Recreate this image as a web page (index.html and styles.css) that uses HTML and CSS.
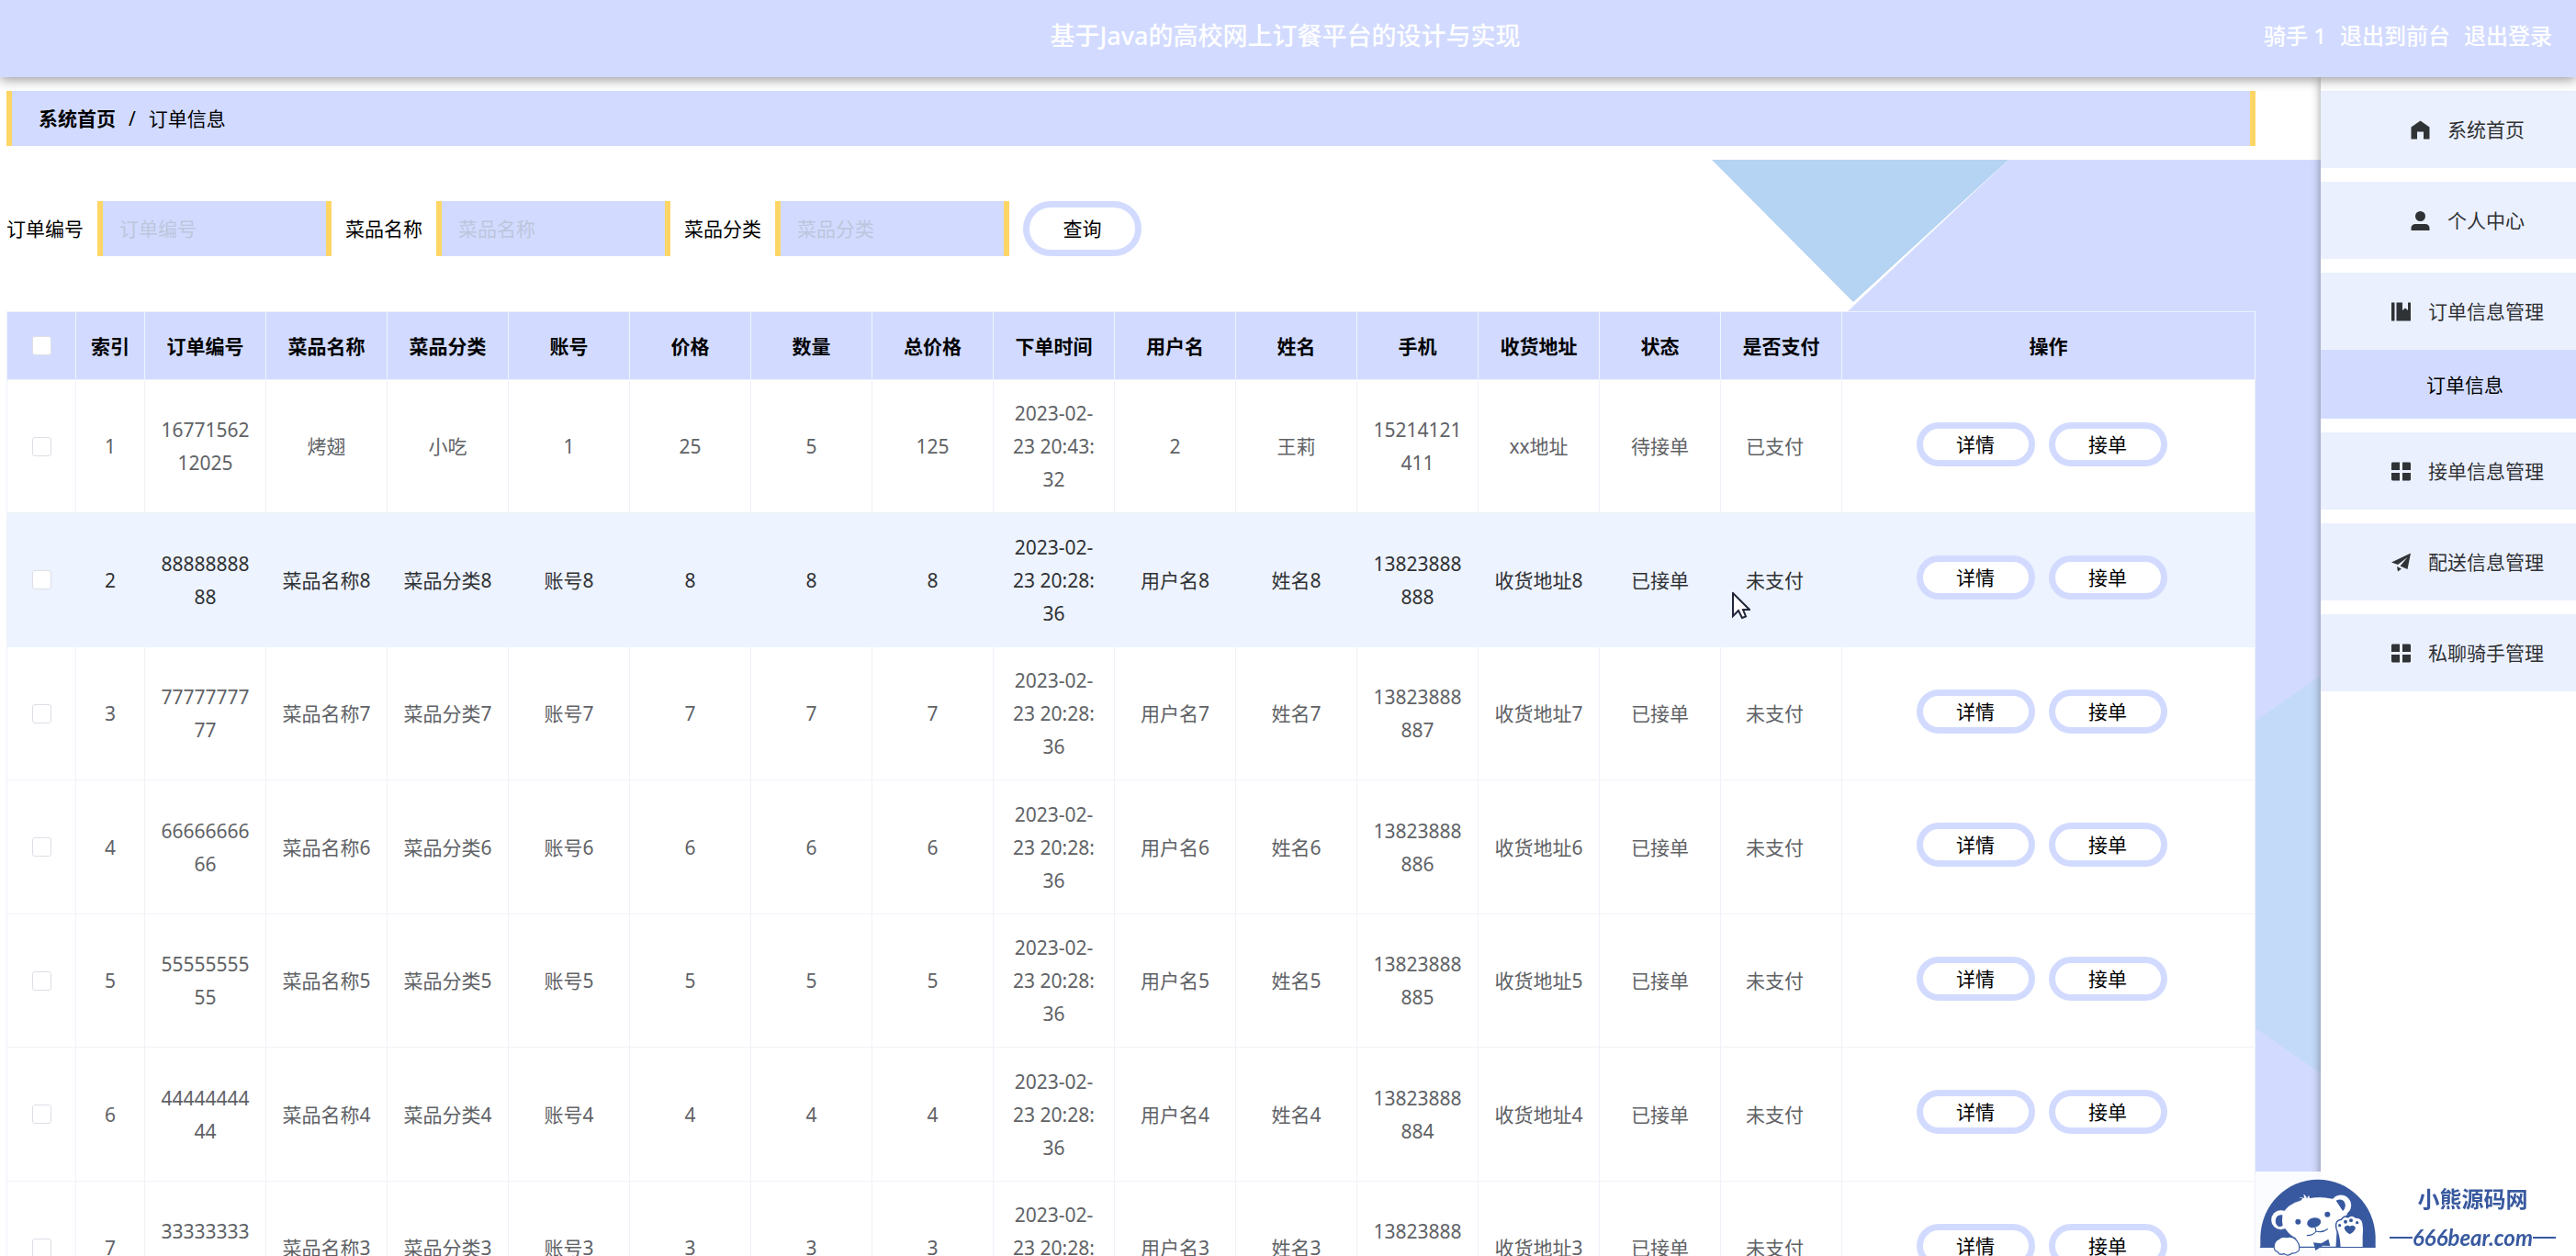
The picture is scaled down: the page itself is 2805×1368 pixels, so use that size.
FILE: index.html
```html
<!DOCTYPE html>
<html lang="zh-CN">
<head>
<meta charset="utf-8">
<title>订单信息</title>
<link rel="stylesheet" href="styles.css">
</head>
<body>
<header class="topbar">
  <h1 class="topbar-title">基于Java的高校网上订餐平台的设计与实现</h1>
  <nav class="topbar-user">
    <span>骑手 1</span>
    <a href="#">退出到前台</a>
    <a href="#">退出登录</a>
  </nav>
</header>

<div class="layout">
  <main class="main">
    <nav class="breadcrumb">
      <a class="breadcrumb-home" href="#">系统首页</a>
      <span>/</span>
      <span>订单信息</span>
    </nav>

    <div class="content">
      <svg class="backdrop" viewBox="0 0 663 1195" aria-hidden="true">
        <polygon fill="#d2dbff" points="323,0 663,0 663,1195 400,1195 146,167"/>
        <polygon fill="#b5d3f2" points="0,0 323,0 154,155"/>
        <polygon fill="#c4daf9" points="663,562 592,611 592,946 663,995"/>
      </svg>

      <form class="search">
        <label for="f-no">订单编号</label>
        <input class="search-input" id="f-no" type="text" placeholder="订单编号">
        <label for="f-name">菜品名称</label>
        <input class="search-input" id="f-name" type="text" placeholder="菜品名称">
        <label for="f-type">菜品分类</label>
        <input class="search-input" id="f-type" type="text" placeholder="菜品分类">
        <button class="pill pill-search" type="button">查询</button>
      </form>

      <table class="orders">
        <colgroup>
          <col class="col-small"><col class="col-small">
          <col class="col-data" span="14">
          <col>
        </colgroup>
        <thead>
          <tr>
            <th><input class="check" type="checkbox" aria-label="全选"></th>
            <th>索引</th><th>订单编号</th><th>菜品名称</th><th>菜品分类</th><th>账号</th><th>价格</th><th>数量</th><th>总价格</th><th>下单时间</th><th>用户名</th><th>姓名</th><th>手机</th><th>收货地址</th><th>状态</th><th>是否支付</th><th>操作</th>
          </tr>
        </thead>
        <tbody>
          <tr>
            <td><input class="check" type="checkbox" aria-label="选择 1"></td>
            <td>1</td><td>1677156212025</td><td>烤翅</td><td>小吃</td><td>1</td><td>25</td><td>5</td><td>125</td><td>2023-02-<br>23 20:43:<br>32</td><td>2</td><td>王莉</td><td>15214121411</td><td>xx地址</td><td>待接单</td><td class="paid">已支付</td>
            <td class="ops"><button class="pill" type="button">详情</button><button class="pill" type="button">接单</button></td>
          </tr>
          <tr class="is-hover">
            <td><input class="check" type="checkbox" aria-label="选择 2"></td>
            <td>2</td><td>8888888888</td><td>菜品名称8</td><td>菜品分类8</td><td>账号8</td><td>8</td><td>8</td><td>8</td><td>2023-02-<br>23 20:28:<br>36</td><td>用户名8</td><td>姓名8</td><td>13823888888</td><td>收货地址8</td><td>已接单</td><td class="paid">未支付</td>
            <td class="ops"><button class="pill" type="button">详情</button><button class="pill" type="button">接单</button></td>
          </tr>
          <tr>
            <td><input class="check" type="checkbox" aria-label="选择 3"></td>
            <td>3</td><td>7777777777</td><td>菜品名称7</td><td>菜品分类7</td><td>账号7</td><td>7</td><td>7</td><td>7</td><td>2023-02-<br>23 20:28:<br>36</td><td>用户名7</td><td>姓名7</td><td>13823888887</td><td>收货地址7</td><td>已接单</td><td class="paid">未支付</td>
            <td class="ops"><button class="pill" type="button">详情</button><button class="pill" type="button">接单</button></td>
          </tr>
          <tr>
            <td><input class="check" type="checkbox" aria-label="选择 4"></td>
            <td>4</td><td>6666666666</td><td>菜品名称6</td><td>菜品分类6</td><td>账号6</td><td>6</td><td>6</td><td>6</td><td>2023-02-<br>23 20:28:<br>36</td><td>用户名6</td><td>姓名6</td><td>13823888886</td><td>收货地址6</td><td>已接单</td><td class="paid">未支付</td>
            <td class="ops"><button class="pill" type="button">详情</button><button class="pill" type="button">接单</button></td>
          </tr>
          <tr>
            <td><input class="check" type="checkbox" aria-label="选择 5"></td>
            <td>5</td><td>5555555555</td><td>菜品名称5</td><td>菜品分类5</td><td>账号5</td><td>5</td><td>5</td><td>5</td><td>2023-02-<br>23 20:28:<br>36</td><td>用户名5</td><td>姓名5</td><td>13823888885</td><td>收货地址5</td><td>已接单</td><td class="paid">未支付</td>
            <td class="ops"><button class="pill" type="button">详情</button><button class="pill" type="button">接单</button></td>
          </tr>
          <tr>
            <td><input class="check" type="checkbox" aria-label="选择 6"></td>
            <td>6</td><td>4444444444</td><td>菜品名称4</td><td>菜品分类4</td><td>账号4</td><td>4</td><td>4</td><td>4</td><td>2023-02-<br>23 20:28:<br>36</td><td>用户名4</td><td>姓名4</td><td>13823888884</td><td>收货地址4</td><td>已接单</td><td class="paid">未支付</td>
            <td class="ops"><button class="pill" type="button">详情</button><button class="pill" type="button">接单</button></td>
          </tr>
          <tr>
            <td><input class="check" type="checkbox" aria-label="选择 7"></td>
            <td>7</td><td>3333333333</td><td>菜品名称3</td><td>菜品分类3</td><td>账号3</td><td>3</td><td>3</td><td>3</td><td>2023-02-<br>23 20:28:<br>36</td><td>用户名3</td><td>姓名3</td><td>13823888883</td><td>收货地址3</td><td>已接单</td><td class="paid">未支付</td>
            <td class="ops"><button class="pill" type="button">详情</button><button class="pill" type="button">接单</button></td>
          </tr>
        </tbody>
      </table>
    </div>
  </main>

  <aside class="sidebar">
    <a class="menu-item" href="#">
      <svg class="icon" viewBox="0 0 21 21"><path d="M10.5 0.500 20.500 7.500V20.500H14V12.500H7V20.500H0.500V7.500Z"/></svg>
      系统首页
    </a>
    <a class="menu-item" href="#">
      <svg class="icon" viewBox="0 0 21 21"><circle cx="10.500" cy="5.500" r="5.500"/><path d="M0.500 21V18.500C0.500 15.500 2.500 14 5 14H16C18.500 14 20.500 15.500 20.500 18.500V21Z"/></svg>
      个人中心
    </a>
    <div class="menu-group">
      <a class="menu-item" href="#">
        <svg class="icon" viewBox="0 0 21 21"><path d="M0 0.500H3.500V20.500H0ZM5.500 0.500H12V9L15 6.500 18 9V0.500H21V20.500H5.500Z"/></svg>
        订单信息管理
      </a>
      <a class="submenu-item" href="#">订单信息</a>
    </div>
    <a class="menu-item" href="#">
      <svg class="icon" viewBox="0 0 21 21"><path d="M1 0.500H9V9H0V1.500ZM12 0.500H20L21 1.500V9H12ZM0 12H9V20.500H1L0 19.500ZM12 12H21V19.500L20 20.500H12Z"/></svg>
      接单信息管理
    </a>
    <a class="menu-item" href="#">
      <svg class="icon" viewBox="0 0 21 21"><path d="M21 0.500 17.500 18 9.500 14.500 17.500 5 7 13 0 10.500ZM6 15 11 17.500 7 20.500Z"/></svg>
      配送信息管理
    </a>
    <a class="menu-item" href="#">
      <svg class="icon" viewBox="0 0 21 21"><path d="M1 0.500H9V9H0V1.500ZM12 0.500H20L21 1.500V9H12ZM0 12H9V20.500H1L0 19.500ZM12 12H21V19.500L20 20.500H12Z"/></svg>
      私聊骑手管理
    </a>
  </aside>
</div>

<div class="brand">
  <svg class="brand-bear" viewBox="18 18 399 276" aria-hidden="true">
    <path fill="#38599f" d="M34 266V230C38 125 120 44 222 44S406 125 410 230V266Z"/>
    <g fill="#fff" stroke="#fff">
      <path d="M166 113 174 104 162 104Q172 102 178 106L176 93Q184 98 186 107L192 97 195 106Q230 98 271 108L318 158 285 180 280 264H160L150 235Q130 227 116 205L106 160Q120 125 166 113Z"/>
      <circle cx="297" cy="128" r="33"/>
      <circle cx="101" cy="176" r="31"/>
      <path d="M266 112 300 160 262 190 240 150ZM104 160 135 150 140 220 118 205Z"/>
    </g>
    <path fill="#38599f" d="M281 113Q298 104 308 116Q317 134 303 147Q296 135 281 113ZM106 160Q91 158 85 170Q79 187 92 197Q99 200 107 195Q104 180 106 160Z"/>
    <ellipse cx="209" cy="185" rx="23" ry="16" fill="#38599f" transform="rotate(-14 209 185)"/>
    <circle cx="157" cy="182" r="9" fill="#38599f"/>
    <circle cx="253" cy="158" r="9" fill="#38599f"/>
    <g fill="none" stroke="#38599f" stroke-width="3.500" stroke-linecap="round">
      <path d="M213 201 216 213Q236 219 253 206M216 213Q207 227 187 227M34 265H408"/>
    </g>
    <path fill="#fff" stroke="#38599f" stroke-width="4" d="M294 264Q292 228 282 205Q276 176 299 175Q306 160 320 168Q332 156 345 168Q366 168 369 187Q373 205 370 230V264"/>
    <path fill="#38599f" d="M326 223Q307 211 308 200Q317 190 327 197Q337 190 345 201Q343 214 326 223Z"/>
    <g fill="#38599f"><circle cx="293" cy="194" r="5"/><circle cx="312" cy="182" r="6"/><circle cx="330" cy="178" r="6"/><circle cx="350" cy="185" r="5"/></g>
    <path fill="#38599f" d="M207 250 233 253 256 239 262 261 238 260 214 276Z"/>
    <path fill="#fff" stroke="#38599f" stroke-width="3.500" d="M92 240Q104 228 120 233Q140 228 153 244Q167 262 158 278Q147 287 137 285Q124 297 112 287Q96 292 91 281Q76 276 79 259Q81 245 92 240Z"/>
  </svg>
  <div class="brand-text">
    <span class="brand-name">小熊源码网</span>
    <span class="brand-url">666bear.com</span>
  </div>
</div>

<svg class="cursor" viewBox="0 0 20 30" aria-hidden="true"><path d="M1 1V26L7 20 11 28 15 26.500 12 19H19Z"/></svg>
</body>
</html>
```
FILE: styles.css
```css
* {
  box-sizing: border-box;
}

body {
  margin: 0;
  height: 100vh;
  overflow: hidden;
  display: flex;
  flex-direction: column;
  background: #fff;
  color: #000;
  font-family: "Noto Sans", "Noto Sans CJK SC", sans-serif;
  font-size: 21px;
  line-height: 36px;
}

a {
  color: inherit;
  text-decoration: none;
}

button,
input {
  font: inherit;
  color: inherit;
}

/* Top bar */
.topbar {
  position: relative;
  z-index: 2;
  flex: none;
  display: grid;
  grid-template-columns: 1fr auto 1fr;
  align-items: center;
  height: 84px;
  padding: 0 26px 6px 20px;
  background: #d2dbff;
  box-shadow: 0 3px 12px rgba(0, 0, 0, 0.4);
  color: #fff;
}

.topbar-title {
  grid-column: 2;
  margin: 0;
  font-size: 27px;
  font-weight: 500;
}

.topbar-user {
  display: flex;
  justify-content: flex-end;
  gap: 15px;
  font-size: 24px;
  font-weight: 500;
}

/* Page columns */
.layout {
  flex: 1;
  min-height: 0;
  display: flex;
}

.main {
  flex: 1;
  min-width: 0;
  overflow: hidden;
  padding-top: 15px;
}

.breadcrumb {
  display: flex;
  align-items: center;
  gap: 14px;
  height: 60px;
  margin: 0 71px 15px 7px;
  padding: 0 29px;
  border: solid #ffd666;
  border-width: 0 6px;
  background: #d2dbff;
}

.breadcrumb-home {
  font-weight: 700;
}

.content {
  position: relative;
  padding: 45px 71px 0 7px;
}

.backdrop {
  position: absolute;
  z-index: -1;
  top: 0;
  right: 0;
  width: 663px;
  height: 1195px;
}

/* Search form */
.search {
  display: flex;
  align-items: center;
  gap: 15px;
  margin-bottom: 60px;
}

.search-input {
  width: 255px;
  height: 60px;
  padding: 0 18px;
  border: solid #ffd666;
  border-width: 0 6px;
  background: #d2dbff;
}

.search-input::placeholder {
  color: #bcc6dc;
  opacity: 1;
}

.pill {
  width: 129px;
  height: 48px;
  padding: 0;
  border: 7px solid #d2dbff;
  border-radius: 30px;
  background: #fff;
  color: #000;
  line-height: 30px;
}

.pill-search {
  height: 60px;
}

/* Orders table */
.orders {
  width: 100%;
  table-layout: fixed;
  border-collapse: separate;
  border-spacing: 0;
  border: solid #eff2fb;
  border-width: 1px 0 0 1px;
  text-align: center;
}

.col-small {
  width: 75px;
}

.col-data {
  width: 132px;
}

.orders th,
.orders td {
  padding: 0 14px;
  border: solid #eff2f8;
  border-width: 0 1px 1px 0;
  word-break: break-all;
}

.orders th {
  height: 74px;
  background: #d2dbff;
  border-right-color: #f0f5ff;
}

.orders td {
  height: 145px;
  background: #fff;
  color: #606266;
}

.orders tr:nth-child(even) td {
  height: 146px;
}

.orders .is-hover td {
  border-color: #edf3ff;
  background: #edf3ff;
  color: #303133;
}

.orders .paid {
  padding-right: 28px;
}

.orders .ops {
  padding: 0 15px 5px 0;
}

.ops .pill + .pill {
  margin-left: 15px;
}

.check {
  appearance: none;
  display: block;
  width: 21px;
  height: 21px;
  margin: 0 auto;
  border: 1px solid #dcdfe6;
  border-radius: 3px;
  background: #fff;
}

.orders th,
.orders th:first-child,
.orders td:first-child {
  padding: 0;
}

/* Sidebar */
.sidebar {
  position: relative;
  z-index: 1;
  flex: none;
  display: flex;
  flex-direction: column;
  gap: 15px;
  width: 278px;
  padding-top: 15px;
  background: #fff;
  box-shadow: 0 0 10px rgba(0, 0, 0, 0.4);
}

.menu-item {
  display: flex;
  align-items: center;
  justify-content: center;
  gap: 19px;
  height: 84px;
  padding-left: 42px;
  background: #ebf0ff;
  color: #303133;
}

.submenu-item {
  display: flex;
  align-items: center;
  justify-content: center;
  height: 75px;
  padding-left: 36px;
  background: #d2dbff;
}

.icon {
  width: 21px;
  height: 21px;
  fill: #303336;
}

/* Site brand over the page corner */
.brand {
  position: fixed;
  z-index: 3;
  right: 0;
  bottom: 0;
  display: flex;
  gap: 13px;
  width: 349px;
  height: 92px;
  background: rgba(255, 255, 255, 0.9);
  color: #38599f;
}

.brand-bear {
  flex: none;
  width: 133px;
  height: 92px;
}

.brand-text {
  display: flex;
  flex-direction: column;
  align-items: center;
  gap: 6px;
  width: 181px;
  padding-top: 12px;
  font-weight: 700;
}

.brand-name {
  font-size: 24px;
}

.brand-url {
  display: flex;
  align-items: center;
  width: 100%;
  font-family: Lato, sans-serif;
  font-size: 24px;
  font-style: italic;
}

.brand-url::before,
.brand-url::after {
  content: "";
  flex: 1;
  height: 2px;
  background: #38599f;
}

.cursor {
  position: fixed;
  z-index: 3;
  left: 1886px;
  top: 645px;
  width: 20px;
  height: 30px;
  fill: #fff;
  stroke: #22263a;
  stroke-width: 2;
}
```
